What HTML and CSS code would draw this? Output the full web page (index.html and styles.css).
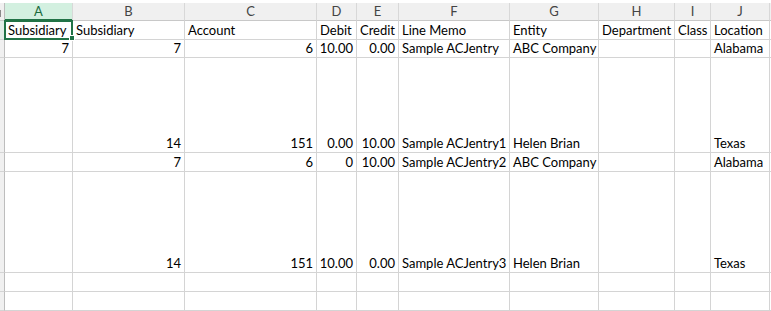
FILE: index.html
```html
<!DOCTYPE html>
<html>
<head>
<meta charset="utf-8">
<link rel="stylesheet" href="styles.css">
</head>
<body>
<div class="sheet">
  <div class="row hdr">
    <div class="c corner"></div>
    <div class="c h hsel">A</div>
    <div class="c h">B</div>
    <div class="c h">C</div>
    <div class="c h">D</div>
    <div class="c h">E</div>
    <div class="c h">F</div>
    <div class="c h">G</div>
    <div class="c h">H</div>
    <div class="c h">I</div>
    <div class="c h">J</div>
    <div class="c h last"></div>
  </div>
  <div class="row r19">
    <div class="c rh rhsel"></div>
    <div class="c sel">Subsidiary</div>
    <div class="c">Subsidiary</div>
    <div class="c">Account</div>
    <div class="c">Debit</div>
    <div class="c">Credit</div>
    <div class="c">Line Memo</div>
    <div class="c">Entity</div>
    <div class="c">Department</div>
    <div class="c">Class</div>
    <div class="c">Location</div>
    <div class="c last"></div>
  </div>
  <div class="row r18">
    <div class="c rh"></div>
    <div class="c n">7</div>
    <div class="c n">7</div>
    <div class="c n">6</div>
    <div class="c n">10.00</div>
    <div class="c n">0.00</div>
    <div class="c">Sample ACJentry</div>
    <div class="c">ABC Company</div>
    <div class="c"></div>
    <div class="c"></div>
    <div class="c">Alabama</div>
    <div class="c last"></div>
  </div>
  <div class="row r95">
    <div class="c rh"></div>
    <div class="c"></div>
    <div class="c n">14</div>
    <div class="c n">151</div>
    <div class="c n">0.00</div>
    <div class="c n">10.00</div>
    <div class="c">Sample ACJentry1</div>
    <div class="c">Helen Brian</div>
    <div class="c"></div>
    <div class="c"></div>
    <div class="c">Texas</div>
    <div class="c last"></div>
  </div>
  <div class="row r19">
    <div class="c rh"></div>
    <div class="c"></div>
    <div class="c n">7</div>
    <div class="c n">6</div>
    <div class="c n">0</div>
    <div class="c n">10.00</div>
    <div class="c">Sample ACJentry2</div>
    <div class="c">ABC Company</div>
    <div class="c"></div>
    <div class="c"></div>
    <div class="c">Alabama</div>
    <div class="c last"></div>
  </div>
  <div class="row r101">
    <div class="c rh"></div>
    <div class="c"></div>
    <div class="c n">14</div>
    <div class="c n">151</div>
    <div class="c n">10.00</div>
    <div class="c n">0.00</div>
    <div class="c">Sample ACJentry3</div>
    <div class="c">Helen Brian</div>
    <div class="c"></div>
    <div class="c"></div>
    <div class="c">Texas</div>
    <div class="c last"></div>
  </div>
  <div class="row r19">
    <div class="c rh"></div>
    <div class="c"></div><div class="c"></div><div class="c"></div><div class="c"></div><div class="c"></div>
    <div class="c"></div><div class="c"></div><div class="c"></div><div class="c"></div><div class="c"></div>
    <div class="c last"></div>
  </div>
  <div class="row r19">
    <div class="c rh"></div>
    <div class="c"></div><div class="c"></div><div class="c"></div><div class="c"></div><div class="c"></div>
    <div class="c"></div><div class="c"></div><div class="c"></div><div class="c"></div><div class="c"></div>
    <div class="c last"></div>
  </div>
</div>
</body>
</html>
```

FILE: styles.css
```css
html, body {
  margin: 0;
  padding: 0;
  background: #ffffff;
}
body {
  font-family: Lato, "Open Sans", sans-serif;
  font-size: 13px;
  color: #000000;
}
.sheet {
  padding-top: 3px;
  width: 771px;
  overflow: hidden;
}
.row {
  display: grid;
  grid-template-columns: 5px 68px 112px 132px 40px 42px 111px 89px 76px 36px 59px 1px;
}
.hdr { height: 18px; }
.r18 { height: 18px; }
.r19 { height: 19px; }
.r95 { height: 95px; }
.r101 { height: 101px; }

.c {
  box-sizing: border-box;
  border-right: 1px solid #d4d4d4;
  border-bottom: 1px solid #d4d4d4;
  display: flex;
  align-items: flex-end;
  padding: 0 2px 0 3px;
  line-height: 17px;
  white-space: nowrap;
  overflow: hidden;
}
.c.n {
  justify-content: flex-end;
  padding: 0 3px 0 2px;
}
.c.last {
  border-right: none;
  padding: 0;
}
.hdr .c {
  background: #f0f0f0;
  border-bottom: 1px solid #c8c8c8;
  border-right: 1px solid #d8d8d8;
}
.hdr .c.h {
  justify-content: center;
  align-items: center;
  padding: 0;
  color: #444444;
  font-size: 13px;
  line-height: 17px;
}
.hdr .c.hsel {
  background: #d3f0e0;
  color: #1a6b3d;
  border-bottom: 1px solid #217346;
  box-shadow: inset 0 -1px 0 #217346;
}
.hdr .c.corner {
  padding: 0;
  border-right: 1px solid #bdbdbd;
  background: #f0f0f0 linear-gradient(#8a8a8a, #8a8a8a) 0 7px / 1px 7px no-repeat;
}
.hdr .c.last {
  border-right: none;
}
.c.rh {
  background: #f0f0f0;
  border-right: 1px solid #bdbdbd;
  border-bottom: 1px solid #d4d4d4;
  padding: 0;
}
.c.rhsel {
  background: #e2ede7;
}
.c.sel {
  position: relative;
  overflow: visible;
}
.c.sel::after {
  content: "";
  position: absolute;
  top: -1px;
  left: -1px;
  right: -1px;
  bottom: -1px;
  border: 2px solid #217346;
  z-index: 2;
}
.c.sel::before {
  content: "";
  position: absolute;
  right: -3px;
  bottom: -2px;
  width: 4px;
  height: 4px;
  background: #217346;
  border: 1px solid #ffffff;
  z-index: 3;
}
```
